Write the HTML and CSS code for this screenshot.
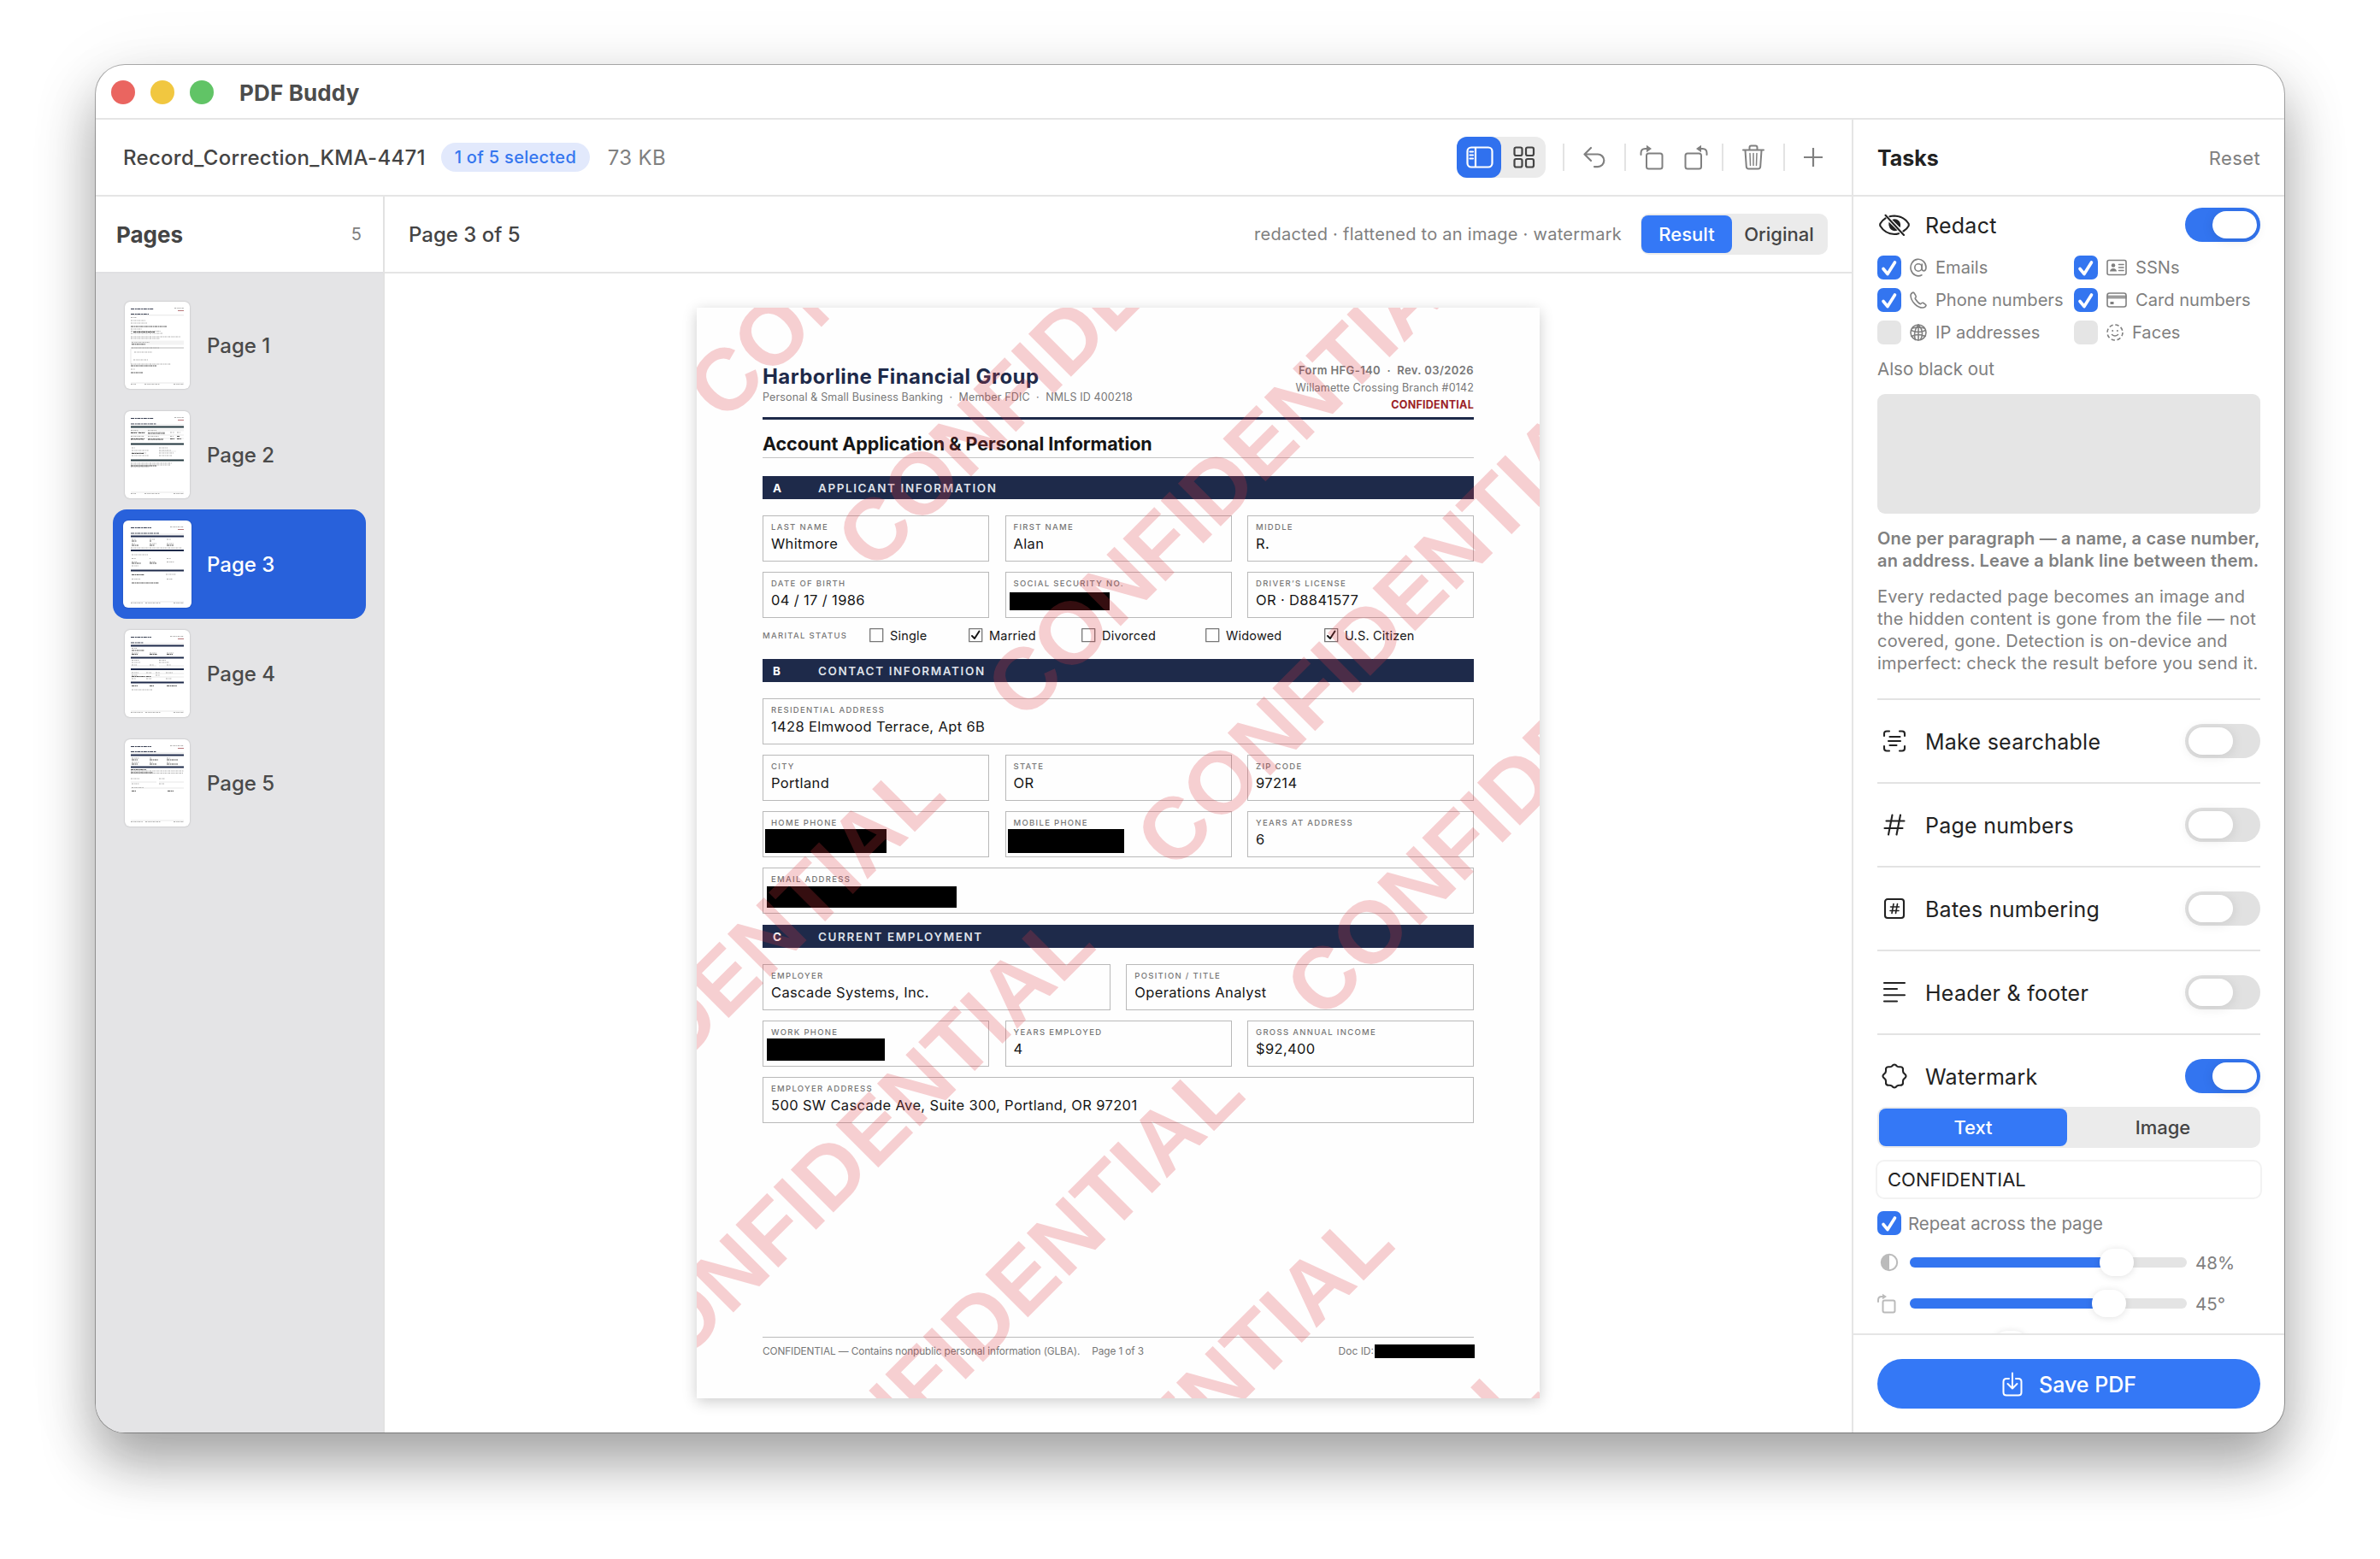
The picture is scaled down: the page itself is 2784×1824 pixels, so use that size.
FILE: index.html
```html
<!DOCTYPE html>
<html lang="en">
<head>
    <meta charset="UTF-8">
    <meta name="viewport" content="width=device-width, initial-scale=1.0">
    <title>PDF Buddy</title>
    <link rel="stylesheet" href="styles.css">
</head>
<body>

    <div class="window">
        <!-- Title bar -->
        <div class="titlebar">
            <span class="light red"></span>
            <span class="light yellow"></span>
            <span class="light green"></span>
            <h1>PDF Buddy</h1>
        </div>

        <div class="app">
            <div class="main">
                <!-- Toolbar -->
                <div class="toolbar">
                    <span class="filename">Record_Correction_KMA-4471</span>
                    <span class="badge">1 of 5 selected</span>
                    <span class="filesize">73 KB</span>
                    <div class="tools">
                        <div class="view-switch">
                            <button class="view active">
                                <svg width="32" height="26" viewBox="0 0 32 26"><rect x="1.5" y="1.5" width="29" height="23" rx="4.5"/><path d="M11 2v22M4.500 6.500h3.500M4.500 10.500h3.500M4.500 14.500h3.500"/></svg>
                            </button>
                            <button class="view">
                                <svg width="26" height="26" viewBox="0 0 26 26"><rect x="1.500" y="1.500" width="9" height="9.500" rx="2"/><rect x="15" y="1.500" width="9" height="9.500" rx="2"/><rect x="1.500" y="15" width="9" height="9.500" rx="2"/><rect x="15" y="15" width="9" height="9.500" rx="2"/></svg>
                            </button>
                        </div>
                        <span class="sep"></span>
                        <svg class="tool undo" width="26" height="26" viewBox="0 0 26 26"><path d="M9 2L1.500 9.500L9 17M1.500 9.500H17a7.300 7.300 0 0 1 0 14.600h-4"/></svg>
                        <span class="sep"></span>
                        <svg class="tool rot-a" width="28" height="30" viewBox="0 0 28 30"><rect x="8" y="10.500" width="18.500" height="18" rx="2.500"/><path d="M1.500 12V10Q1.500 5 6.500 5H9"/><path class="solid" d="M8 .8l6 4.200l-6 4.200z"/></svg>
                        <svg class="tool rot-b" width="28" height="30" viewBox="0 0 28 30"><rect x="1.500" y="10.500" width="18.500" height="18" rx="2.500"/><path d="M26.500 12V10Q26.500 5 21.500 5H19"/><path class="solid" d="M20 .8l-6 4.200l6 4.200z"/></svg>
                        <span class="sep"></span>
                        <svg class="tool trash" width="26" height="30" viewBox="0 0 26 30"><path d="M1 6.500h24M8.500 6V3.500Q8.500 1.500 10.500 1.500h5Q17.500 1.500 17.500 3.500V6M3.500 7l1.300 19Q5 28.500 7.500 28.500h11Q21 28.500 21.200 26L22.500 7"/><path class="thin" d="M9 10.500l.5 14M13 10.500v14M17 10.500l-.5 14"/></svg>
                        <span class="sep"></span>
                        <svg class="tool plus" width="22" height="22" viewBox="0 0 22 22"><path d="M11 .5v21M.5 11h21"/></svg>
                    </div>
                </div>

                <div class="panes">
                    <!-- Pages sidebar -->
                    <div class="sidebar">
                        <div class="pane-header">
                            <h2>Pages</h2>
                            <span class="count">5</span>
                        </div>
                        <div class="page-list">
                            <div class="page-item">
                                <svg class="thumb" viewBox="0 0 76 102">
                                    <path class="t-title" d="M7 8.500h27M7 14.500h21"/>
                                    <path class="t-text" d="M58 7.500h11"/><path class="t-red" d="M62 10.500h7"/>
                                    <path class="t-line" d="M7 15.800h62M7 95h62"/>
                                    <rect class="t-box" x="7" y="45.500" width="62" height="5"/><rect class="t-grey" x="7" y="53" width="62" height="2"/>
                                    <path class="t-text" d="M7 18.500h7M7 22h17M7 25h19M7 32h13M7 34.500h35M7 37h37M7 41h58M7 43h34M8 47.500h21M8 54h32M11 59h21M10 68h17M7 73h47M7 79h5M7 96.500h6M23 96.500h18M57 96.500h12"/>
                                    <path class="t-dark" d="M7 29h42M10 35.500h25M8 49.800h16M7 75h30M7 83h14"/>
                                    <path class="t-line" d="M7 55v18"/>
                                </svg>
                                <span>Page 1</span>
                            </div>
                            <div class="page-item">
                                <svg class="thumb" viewBox="0 0 76 102">
                                    <path class="t-title" d="M7 8.500h27M7 15h30"/>
                                    <path class="t-text" d="M58 7.500h11"/><path class="t-red" d="M62 10.500h7"/>
                                    <path class="t-line" d="M7 16h62M7 95h62M7 28h62M7 32h62M40 47h20"/>
                                    <path class="t-bar green" d="M7 18.500h62M7 38.500h62M7 57.500h62"/>
                                    <rect class="t-box" x="7" y="20.500" width="62" height="3"/>
                                    <path class="t-text" d="M7 22.500h9M27 22.500h10M7 25h17M27 25h20M53 25h5M61 25h4M7 29.500h16M27 29.500h13M53 29.500h4M7 33.500h15M27 33.500h18M8 43h4M40 43h10M8 46h20M40 46h14M8 49h17M40 49h17M8 52h20M40 52h15M7 61h48M7 63h46M7 65h22M7 96.500h6M23 96.500h18M57 96.500h12"/>
                                    <path class="t-dark" d="M7 25.500h7M16 25.500h7M27 26h20M61 29.500h3M7 32.500h16M27 32.800h18M53 32.500h5M61 32.500h5M8 49.500h14M7 64h30"/>
                                </svg>
                                <span>Page 2</span>
                            </div>
                            <div class="page-item selected">
                                <svg class="thumb" viewBox="0 0 76 102">
                                    <path class="t-title" d="M7 8.500h24M7 15h33"/>
                                    <path class="t-text" d="M53 7.500h16"/><path class="t-red" d="M62 10.500h7"/>
                                    <path class="t-line" d="M7 16h62M7 95h62"/>
                                    <path class="t-bar" d="M7 18.500h62M7 35h62M7 58.500h62"/>
                                    <path class="t-text" d="M8 22h5M29 22h6M49 22h5M8 27h4M29 27h8M49 27h8M7 32h60M8 40h19M8 44.500h5M29 44.500h1M49 44.500h5M8 48.500h6M29 48.500h7M49 48.500h9M8 53h8M48 63h12M8 68.500h10M49 68.500h7M7 96.500h14M24 96.500h18M57 96.500h12"/>
                                    <path class="t-dark" d="M8 24h6M29 24h2M8 29h8M29 29h6M49 29h8M8 50h11M29 50h8M8 63.500h15M8 73h32"/>
                                </svg>
                                <span>Page 3</span>
                            </div>
                            <div class="page-item">
                                <svg class="thumb" viewBox="0 0 76 102">
                                    <path class="t-title" d="M7 8.500h24M7 15h15"/>
                                    <path class="t-text" d="M53 7.500h16"/><path class="t-red" d="M62 10.500h7"/>
                                    <path class="t-line" d="M7 16h62M7 95h62M7 42h30M40 42h29M7 51h62M7 55h62"/>
                                    <path class="t-bar" d="M7 18.500h62M7 32.500h62M7 46h62M7 61.500h62"/>
                                    <path class="t-text" d="M8 21.500h6M8 27h8M29 27h8M49 27h8M8 35.500h9M40 35.500h8M8 38h10M40 38h12M8 41h6M29 41h5M49 41h5M8 50h8M25 50h6M36 50h5M48 50h8M8 53h7M36 53h5M8 57h5M25 57h6M48 57h7M8 70h24M7 96.500h14M24 96.500h18M57 96.500h12"/>
                                    <path class="t-dark" d="M8 24h15M8 28.500h7M29 28.500h9M49 28.500h7M8 54.500h16M25 54.500h6M8 65.500h7M29 65.500h5M49 65.500h12"/>
                                </svg>
                                <span>Page 4</span>
                            </div>
                            <div class="page-item">
                                <svg class="thumb" viewBox="0 0 76 102">
                                    <path class="t-title" d="M7 8.500h24M7 14.500h30"/>
                                    <path class="t-text" d="M53 7.500h16"/><path class="t-red" d="M62 10.500h7"/>
                                    <path class="t-line" d="M7 16h62M7 95h62M7 50h30M40 50h29M7 57h62"/>
                                    <path class="t-bar" d="M7 18.500h62M7 32.500h62"/>
                                    <path class="t-text" d="M8 22h9M29 22h3M49 22h4M8 27h9M29 27h4M49 27h4M7 37h62M7 39.500h61M7 46h10M40 46h7M8 52h9M40 52h6M8 56.500h14M7 96.500h14M24 96.500h18M57 96.500h12"/>
                                    <path class="t-dark" d="M8 24h7M29 24h10M49 24h13M8 29h7M29 29h8M49 29h13M7 35.500h18M7 39h26M8 60.500h5M50 60.500h7"/>
                                </svg>
                                <span>Page 5</span>
                            </div>
                        </div>
                    </div>

                    <!-- Preview -->
                    <div class="preview">
                        <div class="pane-header">
                            <span class="page-title">Page 3 of 5</span>
                            <span class="status">redacted · flattened to an image · watermark</span>
                            <div class="segmented result-switch">
                                <button class="active">Result</button>
                                <button>Original</button>
                            </div>
                        </div>
                        <div class="canvas">
                            <div class="paper">
                                <div class="doc-header">
                                    <div>
                                        <div class="company">Harborline Financial Group</div>
                                        <div class="tagline">Personal &amp; Small Business Banking &nbsp;·&nbsp; Member FDIC &nbsp;·&nbsp; NMLS ID 400218</div>
                                    </div>
                                    <div class="doc-meta">
                                        <div class="form-no">Form HFG-140 &nbsp;·&nbsp; Rev. 03/2026</div>
                                        <div class="branch">Willamette Crossing Branch #0142</div>
                                        <div class="secret">CONFIDENTIAL</div>
                                    </div>
                                </div>
                                <h3>Account Application &amp; Personal Information</h3>

                                <div class="bar"><b>A</b><span>APPLICANT INFORMATION</span></div>
                                <div class="fields">
                                    <div class="field w2"><label>LAST NAME</label><p>Whitmore</p></div>
                                    <div class="field w2"><label>FIRST NAME</label><p>Alan</p></div>
                                    <div class="field w2"><label>MIDDLE</label><p>R.</p></div>
                                    <div class="field w2"><label>DATE OF BIRTH</label><p>04 / 17 / 1986</p></div>
                                    <div class="field w2"><label>SOCIAL SECURITY NO.</label><i class="black ssn"></i></div>
                                    <div class="field w2"><label>DRIVER’S LICENSE</label><p>OR · D8841577</p></div>
                                </div>
                                <div class="marital">
                                    <label>MARITAL STATUS</label>
                                    <span class="opt single"><svg width="17" height="17" viewBox="0 0 17 17"><rect x=".7" y=".7" width="15" height="15"/></svg>Single</span>
                                    <span class="opt married"><svg width="17" height="17" viewBox="0 0 17 17"><rect x=".7" y=".7" width="15" height="15"/><path d="M4 9l3 3l5.500-8.500"/></svg>Married</span>
                                    <span class="opt divorced"><svg width="17" height="17" viewBox="0 0 17 17"><rect x=".7" y=".7" width="15" height="15"/></svg>Divorced</span>
                                    <span class="opt widowed"><svg width="17" height="17" viewBox="0 0 17 17"><rect x=".7" y=".7" width="15" height="15"/></svg>Widowed</span>
                                    <span class="opt"><svg width="17" height="17" viewBox="0 0 17 17"><rect x=".7" y=".7" width="15" height="15"/><path d="M4 9l3 3l5.500-8.500"/></svg>U.S. Citizen</span>
                                </div>

                                <div class="bar"><b>B</b><span>CONTACT INFORMATION</span></div>
                                <div class="fields">
                                    <div class="field w6"><label>RESIDENTIAL ADDRESS</label><p>1428 Elmwood Terrace, Apt 6B</p></div>
                                    <div class="field w2"><label>CITY</label><p>Portland</p></div>
                                    <div class="field w2"><label>STATE</label><p>OR</p></div>
                                    <div class="field w2"><label>ZIP CODE</label><p>97214</p></div>
                                    <div class="field w2"><label>HOME PHONE</label><i class="black home"></i></div>
                                    <div class="field w2"><label>MOBILE PHONE</label><i class="black mobile"></i></div>
                                    <div class="field w2"><label>YEARS AT ADDRESS</label><p>6</p></div>
                                    <div class="field w6"><label>EMAIL ADDRESS</label><i class="black email"></i></div>
                                </div>

                                <div class="bar bar-c"><b>C</b><span>CURRENT EMPLOYMENT</span></div>
                                <div class="fields">
                                    <div class="field w3"><label>EMPLOYER</label><p>Cascade Systems, Inc.</p></div>
                                    <div class="field w3"><label>POSITION / TITLE</label><p>Operations Analyst</p></div>
                                    <div class="field w2"><label>WORK PHONE</label><i class="black work"></i></div>
                                    <div class="field w2"><label>YEARS EMPLOYED</label><p>4</p></div>
                                    <div class="field w2"><label>GROSS ANNUAL INCOME</label><p>$92,400</p></div>
                                    <div class="field w6"><label>EMPLOYER ADDRESS</label><p>500 SW Cascade Ave, Suite 300, Portland, OR 97201</p></div>
                                </div>

                                <div class="doc-footer">
                                    <span class="notice">CONFIDENTIAL — Contains nonpublic personal information (GLBA).</span>
                                    <span class="pageno">Page 1 of 3</span>
                                    <span class="docid">Doc ID:</span><i class="black"></i>
                                </div>

                                <!-- Repeated watermark, 45 degrees -->
                                <svg class="watermark" width="986" height="1276" viewBox="0 0 986 1276">
                                    <g transform="rotate(-45)">
                                        <text x="-73.700" y="119">CONFIDENTIAL</text>
                                        <text x="-73.700" y="366.500">CONFIDENTIAL</text>
                                        <text x="-73.700" y="614">CONFIDENTIAL</text>
                                        <text x="-73.700" y="861.500">CONFIDENTIAL</text>
                                        <text x="-73.700" y="1109">CONFIDENTIAL</text>
                                        <text x="-961.700" y="614">CONFIDENTIAL</text>
                                        <text x="-961.700" y="861.500">CONFIDENTIAL</text>
                                        <text x="-961.700" y="1109">CONFIDENTIAL</text>
                                        <text x="-961.700" y="1356.500">CONFIDENTIAL</text>
                                        <text x="-961.700" y="1604">CONFIDENTIAL</text>
                                    </g>
                                </svg>
                            </div>
                        </div>
                    </div>
                </div>
            </div>

            <!-- Tasks panel -->
            <div class="tasks">
                <div class="tasks-header">
                    <h2>Tasks</h2>
                    <span class="reset">Reset</span>
                </div>

                <div class="tasks-body">
                    <div class="task redact">
                        <svg class="task-icon" width="40" height="28" viewBox="0 0 40 28"><path d="M9.500 6.300Q5.500 8.800 3.500 12.500Q2.900 14 3.500 15.500Q9 24.500 20 25Q22.500 25 25 24.200M14.500 4.200Q17 3.500 20 3.500Q31 4 36.500 12.500Q37.100 14 36.500 15.500Q34.800 18.800 30.500 21.500"/><path class="solid" d="M13.600 10.800L23.500 20.500Q19.500 22.200 16 19.500Q12.300 15.800 13.600 10.800zM17.300 7.900Q22 6.200 25.300 9.500Q28.200 13 26.500 17.200z"/><path d="M9.500 2.800L31 26"/></svg>
                        <span class="task-name">Redact</span>
                        <span class="toggle on"></span>
                    </div>
                    <div class="checks">
                        <div class="check">
                            <span class="box on"><svg viewBox="0 0 28 28"><path d="M7 15.500l5 6L20.500 8"/></svg></span>
                            <svg class="ci" width="20" height="22" viewBox="0 0 20 22"><circle cx="10" cy="11" r="4.200"/><path d="M14.200 7v5.500Q14.500 15 16.500 15Q19 14.500 19 11A9 9.800 0 1 0 14 19.800"/></svg>
                            <span>Emails</span>
                        </div>
                        <div class="check">
                            <span class="box on"><svg viewBox="0 0 28 28"><path d="M7 15.500l5 6L20.500 8"/></svg></span>
                            <svg class="ci" width="24" height="20" viewBox="0 0 24 20"><rect x="1" y="1.500" width="22" height="17" rx="2"/><path d="M14.500 6.500h5.500M14.500 10h5.500M14.500 13.500h5.500"/><circle class="solid" cx="8" cy="7.500" r="2.300"/><path class="solid" d="M4 14.500q.5-3.500 4-3.500t4 3.500z"/></svg>
                            <span>SSNs</span>
                        </div>
                        <div class="check">
                            <span class="box on"><svg viewBox="0 0 28 28"><path d="M7 15.500l5 6L20.500 8"/></svg></span>
                            <svg class="ci" width="20" height="20" viewBox="0 0 20 20"><path d="M3.500 1.300Q1 2.500 1 5Q1.500 10.500 6 14.800Q10.500 19 15 19Q18 19 19 16.500Q19 15.500 15.500 13.300Q14.300 12.800 12.500 14.800Q9.500 13.500 6.300 8.500Q6 7.500 7.300 6.300Q7.500 5.500 5.500 2.500Q4.500 .8 3.500 1.300z"/></svg>
                            <span>Phone numbers</span>
                        </div>
                        <div class="check">
                            <span class="box on"><svg viewBox="0 0 28 28"><path d="M7 15.500l5 6L20.500 8"/></svg></span>
                            <svg class="ci" width="24" height="18" viewBox="0 0 24 18"><rect x="1" y="1" width="22" height="16" rx="2.500"/><path d="M1 4.500h22M1 6.500h22"/><rect class="solid" x="4.500" y="11" width="4" height="3"/></svg>
                            <span>Card numbers</span>
                        </div>
                        <div class="check">
                            <span class="box"></span>
                            <svg class="ci" width="20" height="20" viewBox="0 0 20 20"><circle cx="10" cy="10" r="9"/><path d="M10 1Q3.500 9 6.500 18.500M10 1Q17.500 9 12.500 18.500M10 1v18M1.500 7.500Q10 11.500 18.500 7.500M3 5q7-2 14 0M2 14.500q8-4 16 0"/></svg>
                            <span>IP addresses</span>
                        </div>
                        <div class="check">
                            <span class="box"></span>
                            <svg class="ci face" width="20" height="20" viewBox="0 0 20 20"><circle cx="10" cy="10" r="9" stroke-dasharray="4.400 2.670"/><path d="M6.500 12.500q3.500 3 7 0"/><circle class="solid" cx="7.200" cy="8" r="1"/><circle class="solid" cx="12.800" cy="8" r="1"/></svg>
                            <span>Faces</span>
                        </div>
                    </div>
                    <div class="also">Also black out</div>
                    <div class="textarea"></div>
                    <p class="hint strong">One per paragraph — a name, a case number,<br>an address. Leave a blank line between them.</p>
                    <p class="hint">Every redacted page becomes an image and<br>the hidden content is gone from the file — not<br>covered, gone. Detection is on-device and<br>imperfect: check the result before you send it.</p>

                    <div class="task row">
                        <svg class="task-icon" width="40" height="28" viewBox="0 0 40 28"><path d="M8 8V5.500Q8 2.500 11 2.500h3M26 2.500h3Q32 2.500 32 5.500V8M32 20v2.500Q32 25.500 29 25.500h-3M14 25.500h-3Q8 25.500 8 22.500V20M14.500 9h12M13 14h14M14.500 19h8"/></svg>
                        <span class="task-name">Make searchable</span>
                        <span class="toggle"></span>
                    </div>
                    <div class="task row">
                        <svg class="task-icon" width="40" height="28" viewBox="0 0 40 28"><path d="M17.500 2.500L13 25.500M27 2.500L22.500 25.500M10.500 9.500h21M8.500 18h21"/></svg>
                        <span class="task-name">Page numbers</span>
                        <span class="toggle"></span>
                    </div>
                    <div class="task row">
                        <svg class="task-icon" width="40" height="28" viewBox="0 0 40 28"><rect x="9" y="3" width="22" height="22" rx="3"/><path class="fine" d="M19 8.500l-2 11M23.500 8.500l-2 11M15.500 12h10M15 16.500h10"/></svg>
                        <span class="task-name">Bates numbering</span>
                        <span class="toggle"></span>
                    </div>
                    <div class="task row">
                        <svg class="task-icon" width="40" height="28" viewBox="0 0 40 28"><path d="M8 3h24M8 10h15M8 17.200h24M8 24.500h15"/></svg>
                        <span class="task-name">Header &amp; footer</span>
                        <span class="toggle"></span>
                    </div>
                    <div class="task row">
                        <svg class="task-icon" width="40" height="32" viewBox="0 0 40 32"><path d="M20 2.500Q21.500 2.500 23 4.500Q24.500 5.500 26.500 5.200Q29.500 5 30 7.500Q29.700 10 30.500 12Q31.500 13 33 14.500Q34 16 33 17.500Q31.500 19 30.500 20Q29.700 22 30 24.500Q29.500 27 26.500 26.800Q24.500 26.500 23 27.500Q21.500 29.500 20 29.500Q18.500 29.500 17 27.500Q15.500 26.500 13.500 26.800Q10.500 27 10 24.500Q10.300 22 9.500 20Q8.500 19 7 17.500Q6 16 7 14.500Q8.500 13 9.500 12Q10.300 10 10 7.500Q10.500 5 13.500 5.200Q15.500 5.500 17 4.500Q18.500 2.500 20 2.500z"/></svg>
                        <span class="task-name">Watermark</span>
                        <span class="toggle on"></span>
                    </div>
                    <div class="segmented kind-switch">
                        <button class="active">Text</button>
                        <button>Image</button>
                    </div>
                    <div class="input">CONFIDENTIAL</div>
                    <div class="check repeat">
                        <span class="box on"><svg viewBox="0 0 28 28"><path d="M7 15.500l5 6L20.500 8"/></svg></span>
                        <span>Repeat across the page</span>
                    </div>
                    <div class="slider-row">
                        <svg class="si" width="22" height="22" viewBox="0 0 22 22"><circle cx="11" cy="11" r="9.200"/><path class="solid" d="M11 1.800a9.200 9.200 0 0 0 0 18.400z"/></svg>
                        <div class="slider"><div class="fill" style="width: 242px"></div><div class="knob"></div></div>
                        <span>48%</span>
                    </div>
                    <div class="slider-row">
                        <svg class="si rot" width="22" height="24" viewBox="0 0 22 24"><rect x="6.500" y="8.500" width="14" height="14" rx="2"/><path d="M1 10V8Q1 4 5 4H7"/><path class="solid" d="M6 .8l5 3.200l-5 3.200z"/></svg>
                        <div class="slider"><div class="fill" style="width: 233px"></div><div class="knob"></div></div>
                        <span>45°</span>
                    </div>
                    <div class="slider-row">
                        <span class="si"></span>
                        <div class="slider"><div class="fill" style="width: 118px"></div><div class="knob"></div></div>
                    </div>
                </div>

                <div class="tasks-footer">
                    <button class="save">
                        <svg width="24" height="30" viewBox="0 0 24 30"><path d="M8 8H5Q1.500 8 1.500 11.500V24Q1.500 27.500 5 27.500h14Q22.500 27.500 22.500 24V11.500Q22.500 8 19 8h-3M12 1.500V19M6.500 14l5.500 5.500L17.500 14"/></svg>
                        <span>Save PDF</span>
                    </button>
                </div>
            </div>
        </div>
    </div>

</body>
</html>
```
FILE: styles.css
```css
* {
    box-sizing: border-box;
}

body {
    margin: 0;
    padding: 76px 112px;
    width: 2784px;
    height: 1824px;
    overflow: hidden;
    background: #fff;
    font-family: Inter, "Liberation Sans", sans-serif;
    color: #444;
}

h1, h2, h3, p {
    margin: 0;
}

button {
    margin: 0;
    padding: 0;
    border: none;
    background: none;
    font-family: inherit;
    color: inherit;
}

svg {
    display: block;
    flex: none;
    fill: none;
    stroke: currentColor;
    stroke-width: 2;
    stroke-linecap: round;
    stroke-linejoin: round;
}

svg .solid {
    fill: currentColor;
    stroke: none;
}

span, label {
    white-space: nowrap;
}

/* Window */
.window {
    width: 2560px;
    height: 1600px;
    display: flex;
    flex-direction: column;
    overflow: hidden;
    border-radius: 34px;
    background: #fff;
    box-shadow: 0 0 0 1px rgba(0, 0, 0, 0.3), 0 36px 64px rgba(0, 0, 0, 0.33), 0 10px 90px rgba(0, 0, 0, 0.08);
}

.titlebar {
    height: 64px;
    flex: none;
    display: flex;
    align-items: center;
    gap: 18px;
    padding: 2px 0 0 18px;
    border-bottom: 2px solid #e5e5e5;
}

.light {
    width: 28px;
    height: 28px;
    border-radius: 50%;
}

.red { background: #ea6560; }
.yellow { background: #f1c740; }
.green { background: #61c466; }

.titlebar h1 {
    margin-left: 12px;
    font-size: 26px;
    font-weight: 700;
    letter-spacing: 0.15px;
    color: #4c4c4c;
}

.app {
    flex: 1;
    display: flex;
    min-height: 0;
}

.main {
    flex: 1;
    display: flex;
    flex-direction: column;
    min-width: 0;
}

/* Toolbar */
.toolbar {
    height: 90px;
    flex: none;
    display: flex;
    align-items: center;
    padding: 0 34px 0 32px;
    border-bottom: 2px solid #e5e5e5;
}

.filename {
    font-size: 24px;
    font-weight: 500;
    letter-spacing: 0.3px;
}

.badge {
    margin-left: 18px;
    width: 174px;
    height: 34px;
    line-height: 34px;
    border-radius: 17px;
    background: #e2e9fc;
    color: #3576ef;
    font-size: 20px;
    font-weight: 500;
    letter-spacing: 0.3px;
    text-align: center;
}

.filesize {
    margin-left: 21px;
    font-size: 24px;
    letter-spacing: 0.3px;
    color: #808080;
}

.tools {
    margin-left: auto;
    display: flex;
    align-items: center;
    color: #808080;
}

.view-switch {
    display: flex;
    width: 104px;
    height: 48px;
    border-radius: 12px;
    background: #ebebeb;
    color: #444;
}

.view {
    width: 52px;
    display: flex;
    align-items: center;
    justify-content: center;
    border-radius: 12px;
}

.view.active {
    background: #3071ee;
    color: #fff;
}

.view svg {
    margin-left: 1px;
    stroke-width: 2.2;
}

.sep {
    width: 2px;
    height: 32px;
    background: #e3e3e3;
}

.view-switch + .sep { margin-left: 20px; }
.undo { margin: 0 22px 0 22px; stroke-width: 2.2; }
.rot-a { margin-left: 16px; }
.rot-b { margin: 0 16px 0 24px; }
.trash { margin: 0 22px; }
.trash .thin { stroke-width: 1.5; }
.plus { margin-left: 22px; stroke-width: 2.2; }

.panes {
    flex: 1;
    display: flex;
    min-height: 0;
}

.pane-header {
    height: 90px;
    flex: none;
    display: flex;
    align-items: center;
    background: #fff;
    border-bottom: 2px solid #e5e5e5;
}

/* Sidebar */
.sidebar {
    width: 338px;
    background: #e4e4e6;
    border-right: 2px solid #e2e2e2;
}

.sidebar .pane-header {
    justify-content: space-between;
    padding: 0 25px 0 24px;
    border-bottom-color: #e0e0e2;
}

.sidebar h2 {
    font-size: 26px;
    font-weight: 700;
}

.count {
    font-size: 20px;
    color: #808080;
}

.page-list {
    padding: 20px 20px 0;
}

.page-item {
    height: 128px;
    display: flex;
    align-items: center;
    gap: 20px;
    padding-left: 14px;
    border-radius: 16px;
    font-size: 24px;
    font-weight: 500;
    color: #4a4a4a;
}

.page-item.selected {
    gap: 18px;
    padding-left: 12px;
    background: #2861db;
    color: #fff;
}

.thumb {
    width: 76px;
    height: 102px;
    border-radius: 6px;
    background: #fff;
    box-shadow: 0 0 2px rgba(0, 0, 0, 0.25);
    stroke-linecap: butt;
}

.selected .thumb {
    width: 80px;
}

.t-title { stroke: #333a4d; stroke-width: 1; stroke-dasharray: 4 .8 2 .6; }
.t-dark { stroke: #444; stroke-width: .9; stroke-dasharray: 3 .6 1.5 .5; }
.t-text { stroke: #999; stroke-width: .8; stroke-dasharray: 2 .8 1 .6; }
.t-red { stroke: #b0696d; stroke-width: .9; }
.t-line { stroke: #ccc; stroke-width: .5; }
.t-bar { stroke: #1e2a4a; stroke-width: 2.1; }
.t-bar.green { stroke: #22373e; }
.t-box { fill: #f3f3f3; stroke: none; }
.t-grey { fill: #ddd; stroke: none; }

/* Preview */
.preview {
    flex: 1;
    display: flex;
    flex-direction: column;
}

.preview .pane-header {
    padding: 0 28px;
}

.page-title {
    font-size: 24px;
    font-weight: 500;
}

.status {
    margin-left: auto;
    margin-right: 22px;
    font-size: 20px;
    letter-spacing: 0.27px;
    color: #808080;
}

.segmented {
    display: flex;
    height: 48px;
    padding: 2px;
    border-radius: 10px;
    background: #ebebeb;
    font-size: 22px;
}

.segmented button {
    flex: 1;
    border-radius: 8px;
    font-size: 22px;
    font-weight: 500;
}

.segmented .active {
    background: #3478f6;
    color: #fff;
}

.result-switch {
    width: 219px;
    padding-left: 1px;
}

.result-switch .active {
    flex: none;
    width: 106px;
}

.canvas {
    flex: 1;
    padding-top: 40px;
    display: flex;
    justify-content: center;
    align-items: flex-start;
}

/* Document */
.paper {
    position: relative;
    width: 986px;
    height: 1276px;
    padding: 0 77px;
    display: flex;
    flex-direction: column;
    background: #fefefe;
    box-shadow: 0 4px 16px rgba(0, 0, 0, 0.2);
    color: #151515;
}

.doc-header {
    height: 131px;
    flex: none;
    display: flex;
    justify-content: space-between;
    padding-top: 63px;
    border-bottom: 3px solid #1e2a4a;
}

.company {
    margin-top: 3px;
    line-height: 30px;
    font-size: 24px;
    font-weight: 700;
    letter-spacing: 0.4px;
    color: #1e2a4a;
}

.tagline {
    margin-top: -1px;
    line-height: 19px;
    font-size: 12.5px;
    letter-spacing: 0.15px;
    color: #777;
}

.doc-meta {
    line-height: 20.5px;
    font-size: 12.5px;
    letter-spacing: 0.17px;
    text-align: right;
    color: #777;
}

.form-no {
    font-size: 13px;
    font-weight: 600;
    letter-spacing: 0.4px;
}

.secret {
    font-weight: 700;
    letter-spacing: 0.25px;
    color: #9b2226;
}

.paper h3 {
    height: 45px;
    flex: none;
    padding-top: 13px;
    line-height: 30px;
    border-bottom: 1px solid #c4c4c4;
    font-size: 21.5px;
    font-weight: 700;
    letter-spacing: -0.06px;
}

.bar {
    height: 27px;
    flex: none;
    display: flex;
    align-items: center;
    padding-left: 12px;
    background: #1e2a4a;
    color: #dfe2ea;
    font-size: 13.5px;
}

.bar b {
    width: 53px;
    font-weight: 700;
    color: #fff;
}

.bar span {
    font-weight: 600;
    letter-spacing: 1.6px;
}

h3 + .bar { margin-top: 21px; }
.bar-c { margin-top: 13px; }

.fields {
    display: grid;
    grid-template-columns: repeat(6, 1fr);
    gap: 12px 18.5px;
    margin-top: 19px;
}

.w2 { grid-column: span 2; }
.w3 { grid-column: span 3; }
.w6 { grid-column: span 6; }

.field {
    position: relative;
    height: 54px;
    padding: 7px 9px;
    border: 1px solid #b9b9b9;
}

.field label,
.marital label {
    display: block;
    line-height: 12px;
    font-size: 9.5px;
    font-weight: 500;
    letter-spacing: 1.3px;
    color: #777;
}

.field p {
    line-height: 27px;
    font-size: 16.5px;
    letter-spacing: 0.35px;
}

.black {
    background: #000;
}

.field .black {
    position: absolute;
}

.ssn { left: 4.5px; top: 22.5px; width: 117px; height: 21px; }
.home { left: 2px; top: 20px; width: 142px; height: 28px; }
.mobile { left: 2px; top: 20px; width: 136px; height: 28px; }
.email { left: 4px; top: 21px; width: 222px; height: 25px; }
.work { left: 4px; top: 20px; width: 138px; height: 26px; }

.marital {
    height: 48px;
    display: flex;
    align-items: center;
    padding-bottom: 7px;
    font-size: 14.5px;
    letter-spacing: 0.2px;
}

.marital label {
    width: 125px;
}

.opt {
    display: flex;
    align-items: center;
    gap: 7px;
}

.opt rect {
    stroke: #777;
    stroke-width: 1.3;
}

.single { width: 116px; }
.married { width: 132px; }
.divorced { width: 145px; }
.widowed { width: 139px; }

.doc-footer {
    height: 72px;
    margin-top: auto;
    display: flex;
    align-items: flex-start;
    padding-top: 7px;
    border-top: 1px solid #bbb;
    line-height: 18px;
    font-size: 11.8px;
    letter-spacing: -0.1px;
    color: #777;
}

.pageno {
    margin-left: 14px;
}

.docid {
    margin-left: auto;
    font-size: 12px;
    letter-spacing: 0;
}

.doc-footer .black {
    width: 117px;
    height: 16px;
    margin: 1px -1px 0 1px;
}

.watermark {
    position: absolute;
    left: 0;
    top: 0;
}

.watermark text {
    font-family: "Liberation Sans", sans-serif;
    font-size: 102.7px;
    font-weight: 700;
    fill: #dd3c42;
    fill-opacity: 0.24;
    stroke: none;
}

/* Tasks panel */
.tasks {
    width: 506px;
    flex: none;
    display: flex;
    flex-direction: column;
    border-left: 2px solid #e5e5e5;
}

.tasks-header {
    height: 90px;
    flex: none;
    display: flex;
    align-items: center;
    justify-content: space-between;
    padding: 1px 28px 0;
    border-bottom: 2px solid #e5e5e5;
}

.tasks-header h2 {
    font-size: 25px;
    font-weight: 700;
    color: #222;
}

.reset {
    font-size: 22px;
    letter-spacing: 0.4px;
    color: #808080;
}

.tasks-body {
    flex: 1;
    min-height: 0;
    overflow: hidden;
    padding: 0 28px;
}

.task {
    display: flex;
    align-items: center;
    color: #222;
}

.task-icon {
    stroke-width: 2.1;
}

.task-icon .fine {
    stroke-width: 1.6;
}

.redact {
    height: 66px;
}

.row {
    height: 98px;
    border-top: 2px solid #e3e3e3;
}

.task-name {
    margin-left: 16px;
    padding-top: 1px;
    font-size: 25px;
    letter-spacing: 0.25px;
}

.toggle {
    position: relative;
    margin-left: auto;
    width: 88px;
    height: 40px;
    border-radius: 20px;
    background: #e1e1e1;
}

.toggle::after {
    content: "";
    position: absolute;
    left: 4px;
    top: 4px;
    width: 52px;
    height: 32px;
    border-radius: 16px;
    background: #fff;
    box-shadow: 0 2px 14px rgba(0, 0, 0, 0.1);
}

.toggle.on {
    background: #3375f0;
}

.toggle.on::after {
    left: 32px;
}

.checks {
    display: grid;
    grid-template-columns: 230px 1fr;
    row-gap: 10px;
    margin-top: 3px;
}

.check {
    display: flex;
    align-items: center;
    height: 28px;
    font-size: 20.1px;
    color: #808080;
}

.box {
    width: 28px;
    height: 28px;
    flex: none;
    border-radius: 7px;
    background: #e5e5e5;
}

.box.on {
    background: #3375f0;
    color: #fff;
}

.box svg {
    stroke-width: 3.6;
}

.ci {
    margin: 0 10px;
    stroke-width: 1.6;
}

.ci.face circle {
    stroke-linecap: butt;
}

.also {
    margin-top: 16px;
    line-height: 26px;
    font-size: 20.5px;
    color: #808080;
}

.textarea {
    height: 140px;
    margin-top: 16px;
    border-radius: 9px;
    background: #e5e5e5;
}

.hint {
    margin-bottom: 28px;
    line-height: 26px;
    font-size: 20px;
    letter-spacing: 0.21px;
    color: #808080;
    white-space: nowrap;
}

.hint.strong {
    margin: 16px 0 16px;
    font-weight: 600;
    letter-spacing: 0.17px;
}

.kind-switch {
    margin-top: -12px;
}

.kind-switch .active {
    flex: none;
    width: 220px;
}

.input {
    height: 46px;
    margin: 14px -2px 0;
    padding-left: 12px;
    line-height: 42px;
    border: 2px solid #f2f2f2;
    border-radius: 10px;
    font-size: 22px;
    color: #222;
}

.repeat {
    margin-top: 14px;
    font-size: 20.4px;
}

.repeat .box {
    margin-right: 8px;
}

.slider-row {
    display: flex;
    align-items: center;
    height: 48px;
    font-size: 20.5px;
    color: #808080;
}

.repeat + .slider-row {
    margin-top: 8px;
}

.si {
    width: 22px;
    margin: 0 13px 0 3px;
    color: #bbb;
}

.si.rot {
    margin: 0 16px 0 0;
}

.slider {
    display: flex;
    align-items: center;
    width: 324px;
    height: 12px;
    margin-right: 10px;
    border-radius: 6px;
    background: #e4e4e4;
}

.fill {
    height: 12px;
    border-radius: 6px;
    background: #3375f0;
}

.knob {
    width: 40px;
    height: 32px;
    margin-left: -20px;
    border-radius: 16px;
    background: #fff;
    box-shadow: 0 1px 8px rgba(0, 0, 0, 0.12);
}

.tasks-footer {
    height: 116px;
    flex: none;
    padding: 28px 28px 0;
    border-top: 2px solid #e5e5e5;
}

.save {
    width: 100%;
    height: 58px;
    display: flex;
    align-items: center;
    justify-content: center;
    gap: 19px;
    padding: 2px 0 0 1px;
    border-radius: 29px;
    background: #3478f6;
    color: #fff;
    font-size: 25px;
    font-weight: 500;
}
```
